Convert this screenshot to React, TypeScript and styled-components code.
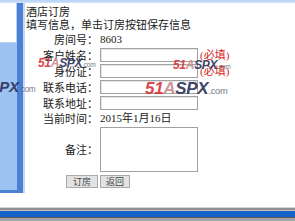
import React from "react";
import styled, { createGlobalStyle } from "styled-components";

const GlobalStyle = createGlobalStyle`
  html, body {
    margin: 0;
    padding: 0;
    background: #fff;
  }
  body {
    width: 295px;
    height: 221px;
    overflow: hidden;
    font-family: "Noto Sans CJK SC", "Liberation Sans", sans-serif;
    color: #1a1a1a;
  }
`;

const Screen = styled.div`
  position: relative;
  width: 295px;
  height: 221px;
  display: flex;
  flex-direction: column;
  overflow: hidden;
`;

const TopStrip = styled.div`
  height: 3px;
  flex: none;
  background: linear-gradient(#b3d2f5, #d2e4f9);
`;

const Body = styled.div`
  flex: 1;
  display: flex;
  align-items: flex-start;
`;

const SidePanel = styled.div`
  width: 17px;
  height: 187px;
  flex: none;
  background: #9cc2f1;
  border-right: 6px solid #4b80d3;
  border-bottom: 3px solid #4b80d3;
  box-shadow: 2px 0 0 #c4daf6;
`;

const SideBox = styled.div`
  width: 16px;
  height: 39px;
  background: #fff;
  border-right: 1px solid #b6d2f3;
  border-bottom: 1px solid #b6d2f3;
`;

const Content = styled.div`
  flex: 1;
  padding: 2px 0 0 3px;
`;

const Line = styled.div`
  font-size: 11px;
  line-height: 13px;
  white-space: nowrap;
`;

const Form = styled.div`
  margin-top: 2px;
  display: grid;
  grid-template-columns: 72px 98px auto;
  column-gap: 2px;
  row-gap: 2px;
  align-items: center;
`;

const Label = styled.div`
  font-size: 11px;
  line-height: 13px;
  text-align: right;
  white-space: nowrap;
`;

const Value = styled.div`
  grid-column: 2 / 4;
  font-family: "Liberation Serif", "Noto Sans CJK SC", serif;
  font-size: 11px;
  line-height: 13px;
  white-space: nowrap;
`;

const Input = styled.input`
  box-sizing: border-box;
  width: 98px;
  height: 14px;
  margin: 0;
  padding: 0;
  border: 1px solid #a2a2a2;
  box-shadow: inset 1px 1px 0 #e4e4e4;
  background: #fff;
`;

const Memo = styled.textarea`
  box-sizing: border-box;
  width: 98px;
  height: 45px;
  margin: 0;
  padding: 0;
  border: 1px solid #a2a2a2;
  background: #fff;
  resize: none;
  display: block;
`;

const Required = styled.span`
  font-family: "Liberation Serif", "Noto Sans CJK SC", serif;
  font-size: 11px;
  line-height: 13px;
  color: #d82424;
  white-space: nowrap;
`;

const Actions = styled.div`
  grid-column: 1 / 4;
  display: flex;
  gap: 2px;
  padding-left: 40px;
  margin-top: 1px;
`;

const Button = styled.button<{ $w: number }>`
  box-sizing: border-box;
  width: ${(p) => p.$w}px;
  height: 13px;
  margin: 0;
  padding: 0;
  font-family: "Noto Sans CJK SC", sans-serif;
  font-size: 9px;
  line-height: 11px;
  color: #444;
  background: #e2e2e2;
  border: 1px solid #a9a9a9;
`;

const Footer = styled.div`
  height: 14px;
  flex: none;
  background: linear-gradient(
    to bottom,
    #d6d6d6 0 1px,
    #8f8f8f 1px 3px,
    #c2c2c2 3px 4px,
    #1463c6 4px 10px,
    #5a5a5a 10px 11px,
    #a3a3a3 11px 14px
  );
`;

const Mark = styled.div<{ $x: number; $y: number; $size: number }>`
  position: absolute;
  left: ${(p) => p.$x}px;
  top: ${(p) => p.$y}px;
  font-family: "Liberation Sans", Arial, sans-serif;
  font-weight: bold;
  font-style: italic;
  font-size: ${(p) => p.$size}px;
  line-height: 1;
  letter-spacing: -0.3px;
  white-space: nowrap;
  pointer-events: none;
  opacity: 0.9;
`;

const MarkNum = styled.span`
  color: #d8333b;
`;

const MarkA = styled.span`
  color: #c98a8e;
`;

const MarkName = styled.span`
  color: #2d3158;
`;

const MarkDot = styled.span`
  font-size: 0.55em;
  font-weight: normal;
  font-style: normal;
  color: #6a6d80;
`;

const Watermark: React.FC<{ x: number; y: number; size: number }> = ({
  x,
  y,
  size,
}) => (
  <Mark $x={x} $y={y} $size={size}>
    <MarkNum>51</MarkNum>
    <MarkA>A</MarkA>
    <MarkName>SPX</MarkName>
    <MarkDot>.com</MarkDot>
  </Mark>
);

export default function App() {
  return (
    <>
      <GlobalStyle />
      <Screen>
        <TopStrip />
        <Body>
          <SidePanel>
            <SideBox />
          </SidePanel>
          <Content>
            <Line>酒店订房</Line>
            <Line>填写信息，单击订房按钮保存信息</Line>
            <Form>
              <Label>房间号：</Label>
              <Value>8603</Value>

              <Label>客户姓名：</Label>
              <Input />
              <Required>(必填)</Required>

              <Label>身份证：</Label>
              <Input />
              <Required>(必填)</Required>

              <Label>联系电话：</Label>
              <Input />
              <span />

              <Label>联系地址：</Label>
              <Input />
              <span />

              <Label>当前时间：</Label>
              <Value>2015年1月16日</Value>

              <Label>备注：</Label>
              <Memo />
              <span />

              <Actions>
                <Button $w={32}>订房</Button>
                <Button $w={30}>返回</Button>
              </Actions>
            </Form>
          </Content>
        </Body>
        <Footer />
        <Watermark x={38} y={57} size={12} />
        <Watermark x={-37} y={79} size={15} />
        <Watermark x={173} y={59} size={12} />
        <Watermark x={145} y={80} size={17} />
      </Screen>
    </>
  );
}
